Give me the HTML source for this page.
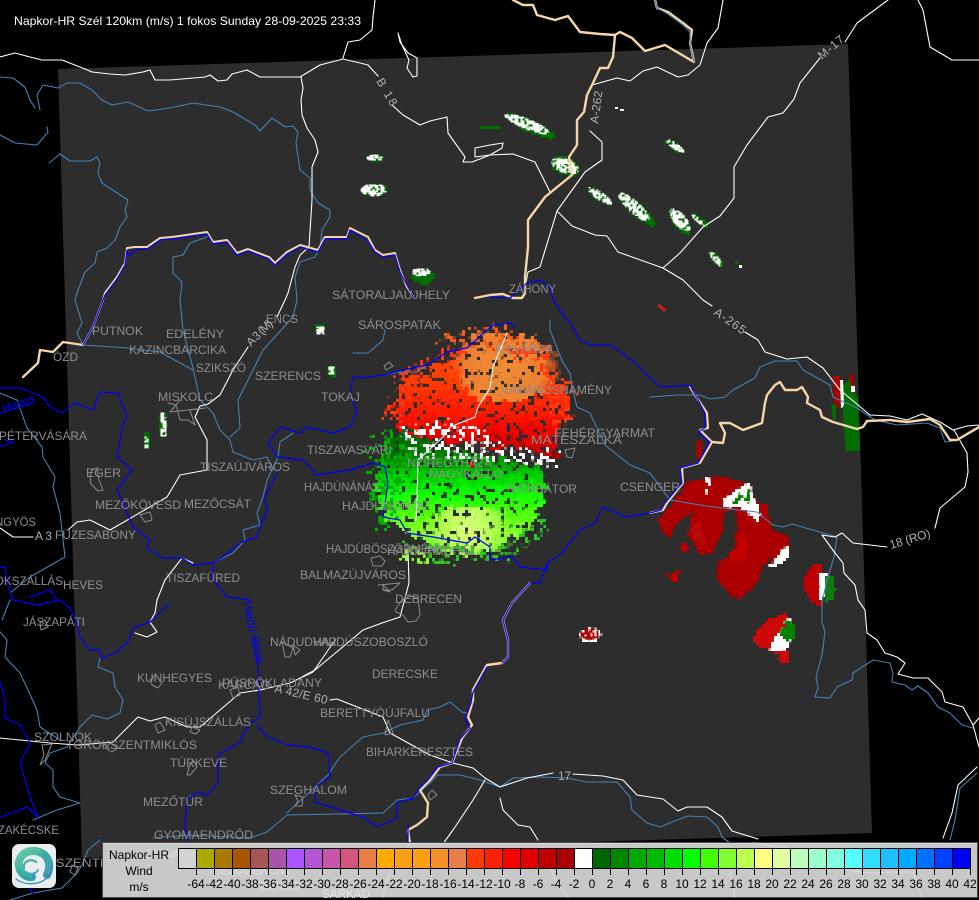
<!DOCTYPE html>
<html><head><meta charset="utf-8"><title>Napkor-HR</title>
<style>
html,body{margin:0;padding:0;background:#000;width:979px;height:900px;overflow:hidden}
svg{display:block}
text{font-family:"Liberation Sans",sans-serif;font-size:12px}
.c text{fill:#8e8e8e}
.r text{fill:#b0b0b0}
.l{fill:none;stroke-linejoin:round;stroke-linecap:round}
</style></head><body>
<svg width="979" height="900" viewBox="0 0 979 900" xmlns="http://www.w3.org/2000/svg">
<defs>
<filter id="holes" x="0" y="0" width="979" height="900" filterUnits="userSpaceOnUse" color-interpolation-filters="sRGB">
 <feTurbulence type="fractalNoise" baseFrequency=".13" numOctaves="2" seed="4" result="d"/>
 <feDisplacementMap in="SourceGraphic" in2="d" scale="18" xChannelSelector="R" yChannelSelector="G" result="g"/>
 <feTurbulence type="fractalNoise" baseFrequency=".17" numOctaves="2" seed="9"/>
 <feColorMatrix type="matrix" values="0 0 0 0 0 0 0 0 0 0 0 0 0 0 0 25 0 0 0 -9"/>
 <feComposite in="g" operator="in" result="h"/>
 <feFlood x="1" y="1" width="1" height="1" flood-color="#000"/><feComposite x="0" y="0" width="3" height="3"/><feTile result="t"/>
 <feComposite in="h" in2="t" operator="in"/><feMorphology operator="dilate" radius="1"/>
</filter>
<filter id="sparse" x="0" y="0" width="979" height="900" filterUnits="userSpaceOnUse" color-interpolation-filters="sRGB">
 <feTurbulence type="fractalNoise" baseFrequency=".14" numOctaves="2" seed="7" result="d"/>
 <feDisplacementMap in="SourceGraphic" in2="d" scale="14" xChannelSelector="R" yChannelSelector="G" result="g"/>
 <feTurbulence type="fractalNoise" baseFrequency=".2" numOctaves="2" seed="3"/>
 <feColorMatrix type="matrix" values="0 0 0 0 0 0 0 0 0 0 0 0 0 0 0 25 0 0 0 -13.8"/>
 <feComposite in="g" operator="in" result="h"/>
 <feFlood x="1" y="1" width="1" height="1" flood-color="#000"/><feComposite x="0" y="0" width="3" height="3"/><feTile result="t"/>
 <feComposite in="h" in2="t" operator="in"/><feMorphology operator="dilate" radius="1"/>
</filter>
<filter id="rag" x="0" y="0" width="979" height="900" filterUnits="userSpaceOnUse" color-interpolation-filters="sRGB">
 <feTurbulence type="fractalNoise" baseFrequency=".22" numOctaves="2" seed="11" result="d"/>
 <feDisplacementMap in="SourceGraphic" in2="d" scale="5" xChannelSelector="R" yChannelSelector="G" result="h"/>
 <feFlood x="1" y="1" width="1" height="1" flood-color="#000"/><feComposite x="0" y="0" width="3" height="3"/><feTile result="t"/>
 <feComposite in="h" in2="t" operator="in"/><feMorphology operator="dilate" radius="1"/>
</filter>
<filter id="hole2" x="0" y="0" width="979" height="900" filterUnits="userSpaceOnUse" color-interpolation-filters="sRGB">
 <feTurbulence type="fractalNoise" baseFrequency=".33" numOctaves="1" seed="2"/>
 <feColorMatrix type="matrix" values="0 0 0 0 0 0 0 0 0 0 0 0 0 0 0 25 0 0 0 -10.5"/>
 <feComposite in="SourceGraphic" operator="in" result="h"/>
 <feFlood x="1" y="1" width="1" height="1" flood-color="#000"/><feComposite x="0" y="0" width="2" height="2"/><feTile result="t"/>
 <feComposite in="h" in2="t" operator="in"/><feMorphology operator="dilate" radius=".6"/>
</filter>
<linearGradient id="gr" gradientUnits="userSpaceOnUse" x1="0" y1="335" x2="0" y2="462">
 <stop offset="0" stop-color="#ff5010"/><stop offset=".35" stop-color="#ff3c00"/><stop offset=".6" stop-color="#ff1c00"/><stop offset=".78" stop-color="#ee0000"/><stop offset="1" stop-color="#b00000"/>
</linearGradient>
<linearGradient id="gg" gradientUnits="userSpaceOnUse" x1="0" y1="445" x2="0" y2="556">
 <stop offset="0" stop-color="#006e00"/><stop offset=".15" stop-color="#009a00"/><stop offset=".3" stop-color="#00d800"/><stop offset=".45" stop-color="#10ff00"/><stop offset=".62" stop-color="#4cff08"/><stop offset=".8" stop-color="#90ff30"/><stop offset="1" stop-color="#50e020"/>
</linearGradient>
<radialGradient id="go" gradientUnits="userSpaceOnUse" cx="505" cy="368" r="56">
 <stop offset="0" stop-color="#ee8c34"/><stop offset=".7" stop-color="#ee8030"/><stop offset="1" stop-color="#f66020" stop-opacity="0"/>
</radialGradient>
<radialGradient id="gy" gradientUnits="userSpaceOnUse" cx="468" cy="530" r="48">
 <stop offset="0" stop-color="#ddff80"/><stop offset=".55" stop-color="#b0ff50"/><stop offset="1" stop-color="#70ff20" stop-opacity="0"/>
</radialGradient>
<linearGradient id="lg" x1="0" y1="0" x2="1" y2="1"><stop offset="0" stop-color="#5fc9a0"/><stop offset=".5" stop-color="#2ea8a0"/><stop offset="1" stop-color="#3a8fb8"/></linearGradient>
</defs>

<rect width="979" height="900" fill="#000"/>
<polygon points="58,69 848,44 872,833 82,858" fill="#2d2d2d"/>

<!-- radar central -->
<g filter="url(#holes)">
 <polygon points="390,410 407,380 443,363 463,357 497,333 543,363 570,397 563,420 550,458 520,448 470,445 430,440 400,432" fill="url(#gr)"/>
 <ellipse cx="505" cy="368" rx="56" ry="34" fill="url(#go)"/>
</g>
<g filter="url(#sparse)">
 <polygon points="380,420 395,375 440,350 497,328 550,350 580,400 570,430 550,420 540,370 480,345 420,375 400,420" fill="#ff3a10"/>
 <polygon points="430,340 470,328 505,322 515,345 470,350" fill="#f06020"/>
</g>
<g filter="url(#holes)">
 <polygon points="373,487 383,453 417,443 483,457 543,467 545,500 530,527 497,547 463,553 417,540 387,520" fill="url(#gg)"/>
 <ellipse cx="468" cy="530" rx="48" ry="24" fill="url(#gy)"/>
 <polygon points="395,433 412,430 430,440 430,450 398,456 385,456" fill="#006e00"/>
</g>
<g filter="url(#sparse)">
 <polygon points="365,440 385,430 410,445 395,520 385,540 370,500" fill="#00b000"/>
 <polygon points="400,540 440,545 500,550 545,510 550,530 510,560 440,565" fill="#30c820"/>
 <polygon points="395,550 420,548 430,562 398,560" fill="#90ff30"/>
</g>
<g filter="url(#sparse)">
 <polygon points="398,428 430,426 470,432 500,440 520,448 560,452 556,466 500,460 455,462 410,456" fill="#fff"/>
 <polygon points="405,425 450,420 490,432 480,450 430,452" fill="#fff"/>
</g>
<g filter="url(#rag)">
 <rect x="552" y="452" width="8" height="6" fill="#aa0000"/><rect x="470" y="462" width="4" height="4" fill="#cc0000"/>
</g>

<!-- radar SE red -->
<g filter="url(#rag)">
 <polygon points="658,520 673,502 687,483 710,477 723,478 750,483 753,498 768,507 770,530 787,533 790,547 783,563 775,567 770,557 762,567 757,583 740,600 732,597 718,580 718,563 733,552 737,530 736,512 725,510 723,530 712,553 700,555 688,533 693,512 677,523 670,537 660,530" fill="#aa0000"/>
 <polygon points="740,533 748,537 745,560 733,563 728,553 738,548" fill="#c20000"/>
 <polygon points="688,530 700,520 705,545 695,540" fill="#b80808"/>
 <polygon points="667,575 680,570 677,582 670,581" fill="#b80000"/>
 <rect x="681" y="544" width="7" height="8" fill="#b80000"/>
 <polygon points="696,442 702,442 702,463 698,463" fill="#aa0000"/>
 <polygon points="752,640 758,628 770,620 785,613 790,622 782,640 778,650 790,650 790,660 783,665 775,650 760,648" fill="#cc0808"/>
 <polygon points="803,580 812,565 822,563 824,590 820,607 810,600 804,590" fill="#c00000"/>
</g>
<g filter="url(#rag)">
 <polygon points="722,500 750,482 752,495 760,510 758,523 745,510 735,507 724,508" fill="#fff"/>
 <polygon points="707,478 710,478 708,498 706,498" fill="#fff"/>
 <polygon points="770,566 787,545 790,552 785,562 775,567" fill="#fff"/>
 <polygon points="820,572 827,572 825,590 822,604 820,600" fill="#fff"/>
 <polygon points="788,617 792,622 790,645 785,650 770,650 772,642 782,630" fill="#fff"/>
 <ellipse cx="590" cy="635" rx="10" ry="7" fill="#fff"/>
</g>
<g filter="url(#rag)">
 <polygon points="733,503 740,492 741,497 736,505" fill="#008000"/><polygon points="745,500 749,487 751,490 748,502" fill="#008000"/>
 <polygon points="825,576 832,575 835,590 832,600 825,603" fill="#107a10"/>
 <polygon points="787,620 795,625 795,640 782,640 780,634" fill="#008000"/>
</g>
<g filter="url(#hole2)"><ellipse cx="590" cy="634" rx="9" ry="6" fill="#aa0000"/></g>

<!-- right edge blob -->
<polygon points="843,385 851,378 858,400 860,451 846,451 843,420" fill="#006e00"/>
<polygon points="833,376 840,376 840,405 834,410" fill="#aa0000"/>
<polygon points="849,374 853,374 855,395 851,388" fill="#aa0000"/>
<polygon points="831,404 836,404 836,420 833,420" fill="#006e00"/>
<polygon points="840,380 843,380 844,405 842,408 841,408" fill="#fff"/>
<rect x="851" y="386" width="4" height="6" fill="#fff"/>

<!-- NE small green/white blobs -->
<g filter="url(#rag)">
 <g fill="#006e00">
 <ellipse cx="530" cy="126" rx="27" ry="6" transform="rotate(25 530 126)"/>
 <rect x="481" y="125" width="20" height="4"/>
 <ellipse cx="565" cy="166" rx="15" ry="8" transform="rotate(20 565 166)"/>
 <ellipse cx="600" cy="197" rx="14" ry="4" transform="rotate(35 600 197)"/>
 <ellipse cx="637" cy="210" rx="24" ry="6" transform="rotate(42 637 210)"/>
 <ellipse cx="680" cy="222" rx="15" ry="6" transform="rotate(48 680 222)"/>
 <ellipse cx="700" cy="221" rx="9" ry="3" transform="rotate(40 700 221)"/>
 <ellipse cx="716" cy="259" rx="10" ry="3" transform="rotate(48 716 259)"/>
 <ellipse cx="675" cy="147" rx="11" ry="3" transform="rotate(35 675 147)"/>
 <ellipse cx="377" cy="158" rx="9" ry="3"/>
 <ellipse cx="375" cy="190" rx="13" ry="5"/>
 <ellipse cx="423" cy="277" rx="11" ry="7"/>
 <rect x="160" y="414" width="6" height="20"/>
 <rect x="145" y="433" width="4" height="14"/>
 <rect x="316" y="325" width="8" height="8"/>
 <rect x="329" y="366" width="6" height="10"/>
 </g>
</g>
<g filter="url(#hole2)" fill="#fff">
 <ellipse cx="527" cy="124" rx="24" ry="5" transform="rotate(22 527 124)"/>
 <ellipse cx="565" cy="166" rx="14" ry="7" transform="rotate(20 565 166)"/>
 <ellipse cx="600" cy="196" rx="14" ry="4" transform="rotate(35 600 196)"/>
 <ellipse cx="634" cy="207" rx="20" ry="6" transform="rotate(42 634 207)"/>
 <ellipse cx="680" cy="220" rx="14" ry="6" transform="rotate(48 680 220)"/>
 <ellipse cx="698" cy="220" rx="8" ry="2" transform="rotate(40 698 220)"/>
 <ellipse cx="716" cy="259" rx="9" ry="3" transform="rotate(50 716 259)"/>
 <ellipse cx="675" cy="146" rx="11" ry="3" transform="rotate(35 675 146)"/>
 <ellipse cx="375" cy="158" rx="8" ry="3"/>
 <ellipse cx="374" cy="190" rx="13" ry="6"/>
 <ellipse cx="421" cy="272" rx="9" ry="4"/>
 <rect x="161" y="412" width="5" height="24"/>
 <rect x="144" y="436" width="5" height="12"/>
 <rect x="316" y="326" width="8" height="8"/>
 <rect x="328" y="367" width="6" height="8"/>
</g>
<rect x="657" y="306" width="9" height="3" fill="#cc2020" transform="rotate(40 661 308)"/>
<rect x="615" y="107" width="3" height="2" fill="#fff"/><rect x="620" y="109" width="4" height="2" fill="#fff"/>
<rect x="735" y="261" width="3" height="3" fill="#006e00"/><rect x="739" y="265" width="3" height="3" fill="#fff"/>

<!-- rivers -->
<g class="l" stroke="#4682b4" stroke-width="1.1">
<path d="M0 77 13 78 25 87 30 100 35 108"/>
<path d="M40 110 37 95 43 85 58 88 67 83 80 83 92 90 102 100 112 105 128 102 148 111 170 108 193 103 220 107 233 112 255 125 260 131 272 118 285 127 293 126 298 132 296 143 300 170 310 178 310 190 318 203 330 210 330 217 322 230 320 248 315 257 300 262 295 277 297 300 293 317 263 350 238 400 240 428 230 437"/>
<path d="M0 135 15 143 37 145 48 132 47 127"/>
<path d="M49 163 60 154 70 161 90 161 97 157 100 163 98 173 102 183 128 200 125 210 127 217 120 227 115 240 107 248 97 252 95 263 85 272 77 293 75 300 82 323 77 333 83 345 128 348 160 352 193 370"/>
<path d="M207 237 190 243 183 255 173 257 173 273 182 282 180 300 183 330 193 368 200 400 213 413 220 430 230 440 233 452 253 460 267 457 273 470"/>
<path d="M0 393 17 400 27 428 42 447 43 457 55 477 53 487 60 513 65 557 30 577 10 593"/>
<path d="M293 433 280 442 278 457 267 480 263 497 257 513 260 525 243 530 245 540 233 553 213 563"/>
<path d="M0 632 7 640 5 657 20 673 28 690 37 710 40 727 60 740"/>
<path d="M10 600 2 620"/>
<path d="M100 658 98 667 113 673 115 687 123 700 120 713 107 719 92 715 80 727 67 747 50 753 45 763 53 770 53 787 60 797 80 803 57 810 33 820"/>
<path d="M500 787 480 780 460 775 437 775 430 783 413 798 397 800 383 813 287 815 267 832 250 838 187 835 153 838"/>
<path d="M467 713 462 712 450 702 440 707 427 710 423 720 400 725 383 733 363 737 340 757 328 775 287 813"/>
<path d="M500 787 513 778 543 777 567 778 587 782 617 782 630 797 632 810 647 823 660 827 677 820 688 816 707 817 718 827 722 837 730 843"/>
<path d="M822 600 822 622 825 632 822 655 816 677 818 688 815 697 830 698 837 687 852 680 853 673 873 660 890 663 893 673 892 682 905 685 912 690 918 686 928 693 938 707 950 713 962 725 973 728"/>
<path d="M977 773 960 788 955 820 950 840"/>
<path d="M650 473 670 500 700 505 722 508 757 512 773 525 783 527 792 524 823 533 837 537 834 557 827 580 822 603"/>
<path d="M650 397 678 395 700 395 710 399 725 397 733 390 755 378 760 367 775 361 797 361 803 370 830 385 833 397 857 408 875 420 897 425 927 423 940 428 945 442 958 440 979 428"/>
<path d="M550 320 550 330 563 363 570 373 572 387 577 407 590 413 605 445 630 465 650 473"/>
<path d="M353 353 368 353 383 340 385 330"/>
<path d="M383 375 400 372 417 372 427 365"/>
<path d="M100 840 88 850 83 863 77 873 62 888 33 893 10 900"/>
</g>

<!-- white roads / borders -->
<g class="l" stroke="#fff" stroke-width="1.1">
<path d="M0 57 15 53 30 57 42 60 62 60 85 69 92 72 110 74 125 75 143 72 150 70 155 80 170 80 205 77 210 75 218 81 227 80 232 74 247 70 260 77 300 77 320 65 343 59 360 63 368 65 378 76"/>
<path d="M392 105 403 115 420 125 430 121 447 117 448 133 465 157 463 162 472 162 490 155 513 154 535 162 550 192"/>
<path d="M343 58 348 42 360 40 372 30 373 17 375 0"/>
<path d="M301 77 303 88 301 100 302 115 307 128 315 140 318 152 312 167 312 200 309 247 300 255 295 267 288 293 285 300 277 317"/>
<path d="M248 347 233 370 220 395 208 404 200 406 195 417 207 440 207 470 180 475 167 497 110 530 90 520 77 522 68 530"/>
<path d="M33 537 13 537 0 528"/>
<path d="M398 33 400 42 408 53 417 58 417 76 413 77 407 68 409 60 402 45 398 33"/>
<path d="M475 148 490 145 503 143 502 148 490 155 475 157 475 148"/>
<path d="M592 85 617 78 630 81 643 71 657 67 678 77 688 75 700 65 707 43 718 28 723 0"/>
<path d="M590 131 602 142 602 160 585 172 557 211 540 267 528 272 525 287"/>
<path d="M557 211 572 226 595 235 607 236 618 252 663 268 683 280 703 300 712 306"/>
<path d="M745 332 758 340 765 352 787 359 807 357 823 368 840 390 870 415 890 416 907 420 922 414 940 422 953 430 967 426 979 425"/>
<path d="M954 430 967 453 968 472 965 487 940 508 935 528"/>
<path d="M887 547 870 545 853 543 842 533 835 537 822 535 835 553 843 563 844 573 855 585 858 600 865 610 867 633 877 640 885 653 897 657 905 663 898 674 913 678 928 678 942 692 945 702 963 707 973 725 979 747"/>
<path d="M979 718 973 725"/>
<path d="M977 767 958 785 952 813 943 838"/>
<path d="M663 268 680 253 703 227 720 216 734 198 734 167 747 145 768 117 783 113 794 99 800 83 820 58"/>
<path d="M845 42 857 23 888 0"/>
<path d="M918 0 923 10 930 47 952 60 979 60"/>
<path d="M507 333 493 367 490 388 478 407 475 417 450 427 443 437 418 460 417 500 416 520"/>
<path d="M408 550 409 583 400 617 382 623 363 630 315 670 300 678"/>
<path d="M333 643 313 672 290 683 260 690 240 693 200 727 187 727 165 717 150 721 138 717 113 742 77 745 50 743 0 738"/>
<path d="M330 700 337 699 383 717 390 733 430 755 453 763 473 768 485 778 500 787 527 778 553 773"/>
<path d="M573 774 603 776 623 780 637 795 663 799 678 811 687 807 707 807 722 817 732 831 758 839"/>
<path d="M485 780 473 800 453 830 440 848"/>
<path d="M500 798 503 810 518 825 530 827 538 840"/>
<path d="M182 558 193 563 182 558 165 580 157 600 155 613 150 622 157 632 147 637 135 633"/>
</g>

<!-- tan national border -->
<g class="l" stroke="#f6d5a6" stroke-width="2.4">
<path d="M513 0 523 5 533 5 537 15 555 20 568 16 580 32 600 34 615 35 620 32 632 38 645 51 665 45 694 62 690 43 692 30 683 23 668 12 657 8 655 0"/>
<path d="M615 35 613 57 608 68 600 68 593 83 587 95 584 112 577 120 577 145 569 157 572 175 545 197 528 220 528 247 525 277 525 293 522 298 513 298 503 294 490 295 475 298"/>
<path d="M23 377 38 363 40 350 53 352 63 342 83 345" />
<path d="M83 345 93 327 103 300 105 293 117 277 125 263 127 248 135 247 147 247 160 238 172 237 207 232 213 242 227 240 237 253 248 249 269 257 275 263 287 252 300 245 318 250 325 237 347 237 350 228 368 237 375 250 383 255 395 253 400 270 407 287 413 296" stroke-width="2"/>
<path d="M690 387 697 398 707 413 708 428 700 430 712 442 700 463 682 468 683 483 667 503 663 510 650 513" stroke-width="2.2"/>
<path d="M712 442 723 443 725 433 720 423 730 423 743 430 762 423 765 403 767 395 775 385 780 382 785 390 797 390 802 387 808 397 807 403 820 410 822 417 833 422 857 429 863 427 867 421 890 420 907 422 930 419 940 425 950 440 957 440 967 434 979 427"/>
<path d="M502 663 487 665 473 690 473 700 468 717 472 725 462 738 452 763 440 767 430 780 420 790 428 803 427 817 417 825 408 830 410 843"/>
<path d="M530 583 512 603 503 620 508 640 508 657 502 663" stroke-width="2.2"/>
</g>

<!-- bright blue county borders -->
<g class="l" stroke="#0000ff" stroke-width="1.2">
<path d="M655 0 657 8 668 14 683 25 690 32 690 45 694 62" stroke="#4682b4"/>
<path d="M127 250 128 257 135 250 147 249 160 240 172 239 207 234 213 244 227 242 237 255 248 251 269 259 275 265 287 254 300 247 318 252 325 239 347 239 350 230 368 241 375 252 383 257 395 255 400 272 407 285 415 300"/>
<path d="M103 300 105 295 117 279 125 265 127 250"/>
<path d="M490 297 510 298 527 283 540 280 550 287 553 300 565 318 570 322 580 340 590 345"/>
<path d="M103 300 93 327 83 345"/>
<path d="M0 388 20 388 43 397 50 407 62 413 75 403 93 410 100 392 118 393 127 417 123 423 117 457 132 470 117 490 133 527 150 540 147 548 163 558 182 558 193 565 213 563 223 557 240 543 257 537 260 527 267 510 265 497 277 473"/>
<path d="M277 457 268 443 280 427 300 433 307 427 333 433 350 427 357 412 350 393 353 377 363 378 383 375 403 370 427 365 447 352 467 348 493 325 510 323 515 327"/>
<path d="M277 457 303 460 313 470 315 475 350 470 373 463 385 467 388 483 383 517 400 520 407 533 433 537 467 543 475 537 490 547 490 560 513 557 520 567 547 570 548 562"/>
<path d="M548 562 540 583 530 583 512 603 503 620 508 640 508 657 502 663"/>
<path d="M590 345 610 345 625 355 640 368 660 387 680 386 690 385 697 398 705 413 705 428 698 432 710 442 698 463 680 468 682 483 665 503 661 510 650 513 625 517 603 507 595 523 580 530 560 555 548 562"/>
<path d="M487 667 473 692 471 703 465 720 470 728 460 739 452 763 438 767 428 780 418 790 412 800"/>
<path d="M213 563 213 580 227 597 250 600"/>
<path d="M170 603 150 622 133 628 128 642 115 653 102 658 100 650 90 650 80 637 77 625 70 608 60 600 37 605 13 600"/>
<path d="M258 667 260 717 248 725 240 742 218 755 218 783 207 795 197 792 187 800 185 827 188 840"/>
<path d="M257 725 267 737 287 745 310 747 328 753 330 777 315 787 315 802 363 817 377 827 397 818 397 803 413 798"/>
<path d="M0 682 5 700 5 718 20 725 30 743 20 763 30 797 38 817 27 807 0 817"/>
<path d="M0 447 13 442 5 440"/><path d="M0 567 5 567 7 583 13 600"/><path d="M30 597 50 590 57 600"/>
<path d="M0 413 33 403"/>
<path d="M33 893 22 880 12 878"/>
<path d="M408 825 408 845"/>
</g>
<path d="M258 667 254 640" class="l" stroke="#0000ff" stroke-width="1"/>

<!-- city outlines -->
<g class="l" stroke="#8c8c8c" stroke-width="1">
<path d="M92 470 97 468 99 480 103 490 98 491 91 484 90 476Z"/>
<path d="M395 610 402 600 410 596 418 598 420 615 416 621 408 622 403 615 396 612Z"/>
<path d="M371 558 380 556 385 561 382 566 373 566Z"/>
<path d="M140 515 150 512 152 520 145 522Z"/>
<path d="M282 642 293 648 290 657 285 657Z"/>
<path d="M193 760 197 767 190 775 187 775 189 767Z"/>
<path d="M295 795 303 797 302 806 295 806 298 801Z"/>
<path d="M168 403 176 405 180 420 188 420 195 425 190 410 205 408 170 412 180 400"/>
<path d="M42 745 52 744 45 760 40 765 44 755Z"/>
<path d="M110 743 118 748 112 752 105 748Z"/>
<path d="M192 727 200 730 196 734 190 732Z"/>
<path d="M389 362 393 366 386 370 384 366Z M383 590 390 592 383 585Z"/>
<path d="M388 720 393 733 385 735Z"/>
<path d="M565 450 575 448 572 458 567 457Z"/>
<path d="M155 725 160 722 165 730 158 733Z"/>
<path d="M378 585 400 583 392 590 383 590"/>
<path d="M432 790 437 795 430 800 428 795Z"/>
<path d="M150 680 156 675 162 683 158 688 152 685Z"/>
<path d="M230 690 238 687 240 695 233 698Z"/>
<path d="M40 622 45 620 48 627 41 630Z"/>
<path d="M72 865 78 868 75 875 70 872Z"/>
<path d="M293 645 300 650 295 655Z"/>
</g>

<!-- city labels -->
<g class="c">
<text x="332" y="299" textLength="118" lengthAdjust="spacingAndGlyphs">SÁTORALJAÚJHELY</text>
<text x="509" y="293" textLength="47" lengthAdjust="spacingAndGlyphs">ZÁHONY</text>
<text x="358" y="329" textLength="83" lengthAdjust="spacingAndGlyphs">SÁROSPATAK</text>
<text x="495" y="353" textLength="58" lengthAdjust="spacingAndGlyphs">KISVÁRDA</text>
<text x="501" y="394" textLength="111" lengthAdjust="spacingAndGlyphs">VÁSÁROSNAMÉNY</text>
<text x="554" y="437" textLength="101" lengthAdjust="spacingAndGlyphs">FEHÉRGYARMAT</text>
<text x="531" y="444" textLength="91" lengthAdjust="spacingAndGlyphs">MÁTÉSZALKA</text>
<text x="620" y="491" textLength="60" lengthAdjust="spacingAndGlyphs">CSENGER</text>
<text x="507" y="493" textLength="70" lengthAdjust="spacingAndGlyphs">NYÍRBÁTOR</text>
<text x="429" y="478" textLength="74" lengthAdjust="spacingAndGlyphs">NAGYKÁLLÓ</text>
<text x="407" y="467" textLength="85" lengthAdjust="spacingAndGlyphs">NYÍREGYHÁZA</text>
<text x="307" y="454" textLength="85" lengthAdjust="spacingAndGlyphs">TISZAVASVÁRI</text>
<text x="321" y="401" textLength="39" lengthAdjust="spacingAndGlyphs">TOKAJ</text>
<text x="255" y="380" textLength="66" lengthAdjust="spacingAndGlyphs">SZERENCS</text>
<text x="266" y="323" textLength="32" lengthAdjust="spacingAndGlyphs">ENCS</text>
<text x="92" y="335" textLength="51" lengthAdjust="spacingAndGlyphs">PUTNOK</text>
<text x="166" y="338" textLength="58" lengthAdjust="spacingAndGlyphs">EDELÉNY</text>
<text x="129" y="354" textLength="97" lengthAdjust="spacingAndGlyphs">KAZINCBARCIKA</text>
<text x="53" y="361" textLength="25" lengthAdjust="spacingAndGlyphs">ÓZD</text>
<text x="196" y="372" textLength="50" lengthAdjust="spacingAndGlyphs">SZIKSZÓ</text>
<text x="158" y="401" textLength="55" lengthAdjust="spacingAndGlyphs">MISKOLC</text>
<text x="-1" y="440" textLength="88" lengthAdjust="spacingAndGlyphs">PÉTERVÁSÁRA</text>
<text x="86" y="477" textLength="35" lengthAdjust="spacingAndGlyphs">EGER</text>
<text x="200" y="471" textLength="90" lengthAdjust="spacingAndGlyphs">TISZAÚJVÁROS</text>
<text x="304" y="491" textLength="76" lengthAdjust="spacingAndGlyphs">HAJDÚNÁNÁS</text>
<text x="342" y="510" textLength="88" lengthAdjust="spacingAndGlyphs">HAJDÚDOROG</text>
<text x="95" y="509" textLength="86" lengthAdjust="spacingAndGlyphs">MEZŐKÖVESD</text>
<text x="184" y="508" textLength="67" lengthAdjust="spacingAndGlyphs">MEZŐCSÁT</text>
<text x="-30" y="526" textLength="66" lengthAdjust="spacingAndGlyphs">GYÖNGYÖS</text>
<text x="55" y="539" textLength="81" lengthAdjust="spacingAndGlyphs">FÜZESABONY</text>
<text x="63" y="589" textLength="40" lengthAdjust="spacingAndGlyphs">HEVES</text>
<text x="-50" y="585" textLength="113" lengthAdjust="spacingAndGlyphs">JÁSZÁROKSZÁLLÁS</text>
<text x="23" y="626" textLength="62" lengthAdjust="spacingAndGlyphs">JÁSZAPÁTI</text>
<text x="166" y="582" textLength="74" lengthAdjust="spacingAndGlyphs">TISZAFÜRED</text>
<text x="326" y="553" textLength="118" lengthAdjust="spacingAndGlyphs">HAJDÚBÖSZÖRMÉNY</text>
<text x="387" y="555" textLength="89" lengthAdjust="spacingAndGlyphs">HAJDÚHADHÁZ</text>
<text x="300" y="579" textLength="106" lengthAdjust="spacingAndGlyphs">BALMAZÚJVÁROS</text>
<text x="395" y="603" textLength="67" lengthAdjust="spacingAndGlyphs">DEBRECEN</text>
<text x="270" y="646" textLength="67" lengthAdjust="spacingAndGlyphs">NÁDUDVAR</text>
<text x="313" y="646" textLength="115" lengthAdjust="spacingAndGlyphs">HAJDÚSZOBOSZLÓ</text>
<text x="372" y="678" textLength="66" lengthAdjust="spacingAndGlyphs">DERECSKE</text>
<text x="137" y="682" textLength="75" lengthAdjust="spacingAndGlyphs">KUNHEGYES</text>
<text x="222" y="687" textLength="100" lengthAdjust="spacingAndGlyphs">PÜSPÖKLADÁNY</text>
<text x="218" y="689" textLength="52" lengthAdjust="spacingAndGlyphs">KARCAG</text>
<text x="320" y="717" textLength="110" lengthAdjust="spacingAndGlyphs">BERETTYÓÚJFALU</text>
<text x="165" y="726" textLength="86" lengthAdjust="spacingAndGlyphs">KISÚJSZÁLLÁS</text>
<text x="34" y="741" textLength="58" lengthAdjust="spacingAndGlyphs">SZOLNOK</text>
<text x="66" y="749" textLength="131" lengthAdjust="spacingAndGlyphs">TÖRÖKSZENTMIKLÓS</text>
<text x="366" y="756" textLength="107" lengthAdjust="spacingAndGlyphs">BIHARKERESZTES</text>
<text x="170" y="767" textLength="57" lengthAdjust="spacingAndGlyphs">TÚRKEVE</text>
<text x="270" y="794" textLength="77" lengthAdjust="spacingAndGlyphs">SZEGHALOM</text>
<text x="143" y="806" textLength="60" lengthAdjust="spacingAndGlyphs">MEZŐTÚR</text>
<text x="-20" y="834" textLength="79" lengthAdjust="spacingAndGlyphs">TISZAKÉCSKE</text>
<text x="154" y="839" textLength="99" lengthAdjust="spacingAndGlyphs">GYOMAENDRŐD</text>
<text x="27" y="867" textLength="131" lengthAdjust="spacingAndGlyphs">KUNSZENTMÁRTON</text>
</g>

<!-- road labels -->
<g class="r">
<text transform="translate(376 81) rotate(60)" textLength="30">B 18</text>
<text transform="translate(598 124) rotate(-82)" textLength="33">A-262</text>
<text transform="translate(822 60) rotate(-40)" textLength="30">M-17</text>
<text transform="translate(713 314) rotate(35)" textLength="36">A-265</text>
<text transform="translate(891 549) rotate(-17)" textLength="42">18 (RO)</text>
<text transform="translate(251 347) rotate(-45)" textLength="32">A 3 (M)</text>
<text transform="translate(274 692) rotate(13)" textLength="54">A 42/E 60</text>
<text x="558" y="780" textLength="13">17</text>
<text x="35" y="540" textLength="17">A 3</text>
</g>
<text transform="translate(243 602) rotate(78)" style="fill:#0000ff" textLength="64" lengthAdjust="spacingAndGlyphs">Hajdú-Bihar</text>
<text transform="translate(4 413) rotate(-20)" style="fill:#0000ff" textLength="34" lengthAdjust="spacingAndGlyphs">Heves</text>

<!-- title -->
<text x="14" y="25" fill="#fff" textLength="347" lengthAdjust="spacingAndGlyphs">Napkor-HR Szél 120km (m/s) 1 fokos Sunday 28-09-2025 23:33</text>

<!-- legend panel -->
<rect x="102.5" y="842.5" width="875" height="55" fill="#c8c8c8" stroke="#4a4a4a"/>
<rect x="103" y="843" width="874" height="1" fill="#d8d8d8"/>
<g class="l" stroke="#dcdcdc" stroke-width="1">
<path d="M410 843 390 870 383 897"/>
<path d="M440 848 432 862"/>
<path d="M543 847 555 880 568 897"/>
<path d="M845 870 870 873 895 872 913 872 922 897"/>
<path d="M753 843 787 848"/>
<path d="M730 870 735 897"/>
</g>
<g style="fill:#dedede">
<text x="145" y="858" fill="#dedede" textLength="42" lengthAdjust="spacingAndGlyphs">ZARVAS</text>
<text x="210" y="874" fill="#dedede" textLength="82" lengthAdjust="spacingAndGlyphs">MEZŐBERÉNY</text>
<text x="260" y="890" fill="#dedede" textLength="40" lengthAdjust="spacingAndGlyphs">BÉKÉS</text>
<text x="322" y="898" fill="#e4e4e4" textLength="48" lengthAdjust="spacingAndGlyphs">SARKAD</text>
</g>

<text x="139" y="859" text-anchor="middle" fill="#000">Napkor-HR</text>
<text x="139" y="875" text-anchor="middle" fill="#000">Wind</text>
<text x="139" y="891" text-anchor="middle" fill="#000">m/s</text>

<g stroke="#000" stroke-width="1">
<rect x="178.5" y="848.5" width="18" height="20" fill="#d3d3d3"/>
<rect x="196.5" y="848.5" width="18" height="20" fill="#aaaa00"/>
<rect x="214.5" y="848.5" width="18" height="20" fill="#aa7a00"/>
<rect x="232.5" y="848.5" width="18" height="20" fill="#aa5500"/>
<rect x="250.5" y="848.5" width="18" height="20" fill="#a85555"/>
<rect x="268.5" y="848.5" width="18" height="20" fill="#aa55aa"/>
<rect x="286.5" y="848.5" width="18" height="20" fill="#aa55ff"/>
<rect x="304.5" y="848.5" width="18" height="20" fill="#b355d5"/>
<rect x="322.5" y="848.5" width="18" height="20" fill="#c855aa"/>
<rect x="340.5" y="848.5" width="18" height="20" fill="#d4557f"/>
<rect x="358.5" y="848.5" width="18" height="20" fill="#e87f47"/>
<rect x="376.5" y="848.5" width="18" height="20" fill="#ffaa00"/>
<rect x="394.5" y="848.5" width="18" height="20" fill="#f9a015"/>
<rect x="412.5" y="848.5" width="18" height="20" fill="#f9a015"/>
<rect x="430.5" y="848.5" width="18" height="20" fill="#f58f28"/>
<rect x="448.5" y="848.5" width="18" height="20" fill="#e87f47"/>
<rect x="466.5" y="848.5" width="18" height="20" fill="#ff3c00"/>
<rect x="484.5" y="848.5" width="18" height="20" fill="#ff2000"/>
<rect x="502.5" y="848.5" width="18" height="20" fill="#ff0000"/>
<rect x="520.5" y="848.5" width="18" height="20" fill="#e00000"/>
<rect x="538.5" y="848.5" width="18" height="20" fill="#c00000"/>
<rect x="556.5" y="848.5" width="18" height="20" fill="#aa0000"/>
<rect x="574.5" y="848.5" width="18" height="20" fill="#ffffff"/>
<rect x="592.5" y="848.5" width="18" height="20" fill="#006600"/>
<rect x="610.5" y="848.5" width="18" height="20" fill="#008800"/>
<rect x="628.5" y="848.5" width="18" height="20" fill="#00aa00"/>
<rect x="646.5" y="848.5" width="18" height="20" fill="#00bb00"/>
<rect x="664.5" y="848.5" width="18" height="20" fill="#00dd00"/>
<rect x="682.5" y="848.5" width="18" height="20" fill="#00ff00"/>
<rect x="700.5" y="848.5" width="18" height="20" fill="#40ff00"/>
<rect x="718.5" y="848.5" width="18" height="20" fill="#80ff30"/>
<rect x="736.5" y="848.5" width="18" height="20" fill="#bbff50"/>
<rect x="754.5" y="848.5" width="18" height="20" fill="#ffff80"/>
<rect x="772.5" y="848.5" width="18" height="20" fill="#dfff9f"/>
<rect x="790.5" y="848.5" width="18" height="20" fill="#bbffbb"/>
<rect x="808.5" y="848.5" width="18" height="20" fill="#99ffcc"/>
<rect x="826.5" y="848.5" width="18" height="20" fill="#7fffe0"/>
<rect x="844.5" y="848.5" width="18" height="20" fill="#55ffff"/>
<rect x="862.5" y="848.5" width="18" height="20" fill="#33ddff"/>
<rect x="880.5" y="848.5" width="18" height="20" fill="#1cc0ff"/>
<rect x="898.5" y="848.5" width="18" height="20" fill="#00aaff"/>
<rect x="916.5" y="848.5" width="18" height="20" fill="#0070ff"/>
<rect x="934.5" y="848.5" width="18" height="20" fill="#0040ff"/>
<rect x="952.5" y="848.5" width="18" height="20" fill="#0000ff"/>
<path fill="none" d="M196.5 869v6M214.5 869v6M232.5 869v6M250.5 869v6M268.5 869v6M286.5 869v6M304.5 869v6M322.5 869v6M340.5 869v6M358.5 869v6M376.5 869v6M394.5 869v6M412.5 869v6M430.5 869v6M448.5 869v6M466.5 869v6M484.5 869v6M502.5 869v6M520.5 869v6M538.5 869v6M556.5 869v6M574.5 869v6M592.5 869v6M610.5 869v6M628.5 869v6M646.5 869v6M664.5 869v6M682.5 869v6M700.5 869v6M718.5 869v6M736.5 869v6M754.5 869v6M772.5 869v6M790.5 869v6M808.5 869v6M826.5 869v6M844.5 869v6M862.5 869v6M880.5 869v6M898.5 869v6M916.5 869v6M934.5 869v6M952.5 869v6M970.5 869v6"/>
</g>
<g text-anchor="middle" fill="#000">
<text x="196" y="888">-64</text><text x="214" y="888">-42</text><text x="232" y="888">-40</text><text x="250" y="888">-38</text><text x="268" y="888">-36</text><text x="286" y="888">-34</text><text x="304" y="888">-32</text><text x="322" y="888">-30</text><text x="340" y="888">-28</text><text x="358" y="888">-26</text><text x="376" y="888">-24</text><text x="394" y="888">-22</text><text x="412" y="888">-20</text><text x="430" y="888">-18</text><text x="448" y="888">-16</text><text x="466" y="888">-14</text><text x="484" y="888">-12</text><text x="502" y="888">-10</text><text x="520" y="888">-8</text><text x="538" y="888">-6</text><text x="556" y="888">-4</text><text x="574" y="888">-2</text><text x="592" y="888">0</text><text x="610" y="888">2</text><text x="628" y="888">4</text><text x="646" y="888">6</text><text x="664" y="888">8</text><text x="682" y="888">10</text><text x="700" y="888">12</text><text x="718" y="888">14</text><text x="736" y="888">16</text><text x="754" y="888">18</text><text x="772" y="888">20</text><text x="790" y="888">22</text><text x="808" y="888">24</text><text x="826" y="888">26</text><text x="844" y="888">28</text><text x="862" y="888">30</text><text x="880" y="888">32</text><text x="898" y="888">34</text><text x="916" y="888">36</text><text x="934" y="888">38</text><text x="952" y="888">40</text><text x="970" y="888">42</text>
</g>

<!-- logo -->
<rect x="12" y="844" width="44" height="44" rx="7" fill="#e9edee"/>
<g class="l" stroke="url(#lg)">
<path d="M47 875C53 861 45 851 33 851 23 851 18 859 19 866 20 873 26 878 32 877" stroke-width="8"/>
<path d="M16 879C24 885 38 886 47 878" stroke-width="1.4" stroke="#3a9cb8"/>
<path d="M24 868C23 861 31 858 36 862" stroke-width="2.4" stroke="#49b3a8"/>
<path d="M26 872C30 875 36 874 38 870" stroke-width="1.8" stroke="#3a9cb8"/>
</g>
<g class="l" stroke="#e9edee" stroke-width=".5" opacity=".45">
<path d="M48 874C54 860 46 850 33 849 22 849 17 858 17 866"/>
<path d="M46 873C51 861 44 852 33 852 24 852 20 859 20 866 21 872 26 877 32 877"/>
<path d="M44 872C48 862 42 854 33 854 26 854 22 860 22 866 23 871 27 875 32 875"/>
</g>
</svg>
</body></html>
